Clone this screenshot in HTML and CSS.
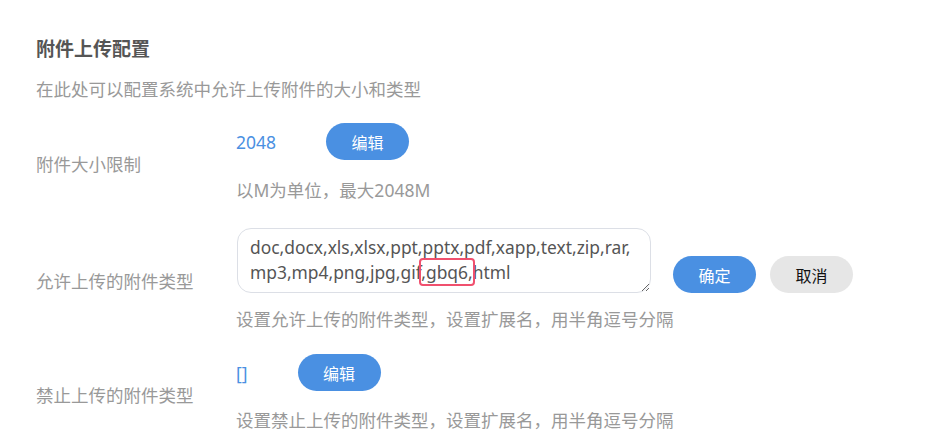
FILE: index.html
```html
<!DOCTYPE html>
<html lang="zh-CN">
<head>
    <meta charset="UTF-8">
    <title>附件上传配置</title>
    <link rel="stylesheet" href="styles.css">
</head>
<body>

<div class="page">
    <h3 class="title">附件上传配置</h3>
    <p class="desc">在此处可以配置系统中允许上传附件的大小和类型</p>

    <!-- 附件大小 -->
    <div class="row">
        <div class="label">附件大小限制</div>
        <div class="field">
            <div class="line">
                <span class="value">2048</span>
                <button class="btn btn-primary">编辑</button>
            </div>
            <div class="hint">以M为单位，最大2048M</div>
        </div>
    </div>

    <!-- 允许类型 -->
    <div class="row">
        <div class="label">允许上传的附件类型</div>
        <div class="field">
            <div class="line line-edit">
                <div class="textarea">doc,docx,xls,xlsx,ppt,pptx,pdf,xapp,text,zip,rar,<br>mp3,mp4,png,jpg,gif<span class="mark">,gbq6,</span>html</div>
                <button class="btn btn-primary">确定</button>
                <button class="btn btn-default">取消</button>
            </div>
            <div class="hint hint-edit">设置允许上传的附件类型，设置扩展名，用半角逗号分隔</div>
        </div>
    </div>

    <!-- 禁止类型 -->
    <div class="row">
        <div class="label">禁止上传的附件类型</div>
        <div class="field">
            <div class="line">
                <span class="value">[]</span>
                <button class="btn btn-primary">编辑</button>
            </div>
            <div class="hint">设置禁止上传的附件类型，设置扩展名，用半角逗号分隔</div>
        </div>
    </div>
</div>

</body>
</html>
```

FILE: styles.css
```css
/* 基本样式 */
body {
    margin: 0;
    font-family: "Noto Sans", "Noto Sans CJK SC", sans-serif;
    background: #fff;
}
.page {
    padding: 35px 0 0 36px;
}
.title {
    margin: 0;
    font-size: 19px;
    line-height: 28px;
    font-weight: bold;
    color: #555;
}
.desc {
    margin: 14px 0 0;
    font-size: 17.5px;
    line-height: 24px;
    color: #999;
}
/* 每一行配置 */
.row {
    display: flex;
    align-items: center;
    margin-top: 22px;
}
.row + .row {
    margin-top: 26px;
}
.label {
    width: 200px;
    font-size: 17.5px;
    color: #999;
    padding-top: 2px;
}
.field {
    display: flex;
    flex-direction: column;
}
.line {
    display: flex;
    align-items: center;
}
.line-edit {
    align-items: flex-end;
}
.value {
    font-size: 17.5px;
    color: #4a90e2;
    margin-right: 50px;
}
.btn {
    width: 83px;
    height: 37px;
    border: none;
    border-radius: 19px;
    font-family: inherit;
    font-size: 16px;
    cursor: pointer;
}
.btn-primary {
    background: #4a90e2;
    color: #fff;
}
.btn-default {
    background: #e6e6e6;
    color: #111;
    margin-left: 14px;
}
.textarea {
    box-sizing: border-box;
    width: 414px;
    height: 65px;
    margin-left: 1px;
    margin-right: 22px;
    padding: 6px 12px;
    border: 1px solid #dcdfe6;
    border-radius: 14px;
    font-size: 17.4px;
    line-height: 25px;
    color: #555;
    overflow: auto;
    resize: both;
}
.mark {
    outline: 2px solid #f0506e;
    border-radius: 2px;
}
.hint {
    margin-top: 18px;
    font-size: 17.5px;
    line-height: 24px;
    color: #999;
}
.hint-edit {
    margin-top: 14px;
}
.row:last-child {
    margin-top: 23px;
}
.row:last-child .hint {
    margin-top: 17px;
}
```
